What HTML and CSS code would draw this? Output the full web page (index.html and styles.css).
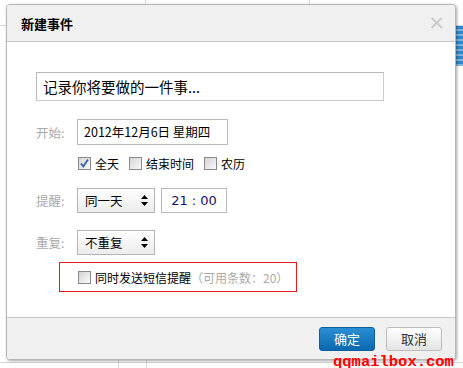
FILE: index.html
```html
<!DOCTYPE html>
<html>
  <head>
    <meta charset="utf-8">
    <link rel="stylesheet" href="styles.css">
    <title>新建事件</title>
  </head>
  <body>
    <!--calendar behind the dialog-->
    <div class="calendar">
      <div class="cal-line h1"></div>
      <div class="cal-line v1"></div>
      <div class="cal-line v2"></div>
      <div class="cal-blue"></div>
      <div class="cal-line h2"></div>
      <div class="cal-line v3"></div>
      <div class="cal-line v4"></div>
    </div>

    <!--Dialog-->
    <div class="dialog">
      <div class="dlg-head">
        <span class="dlg-title">新建事件</span>
        <span class="dlg-close">×</span>
      </div>
      <div class="dlg-body">
        <div class="title-box">记录你将要做的一件事...</div>

        <div class="row row-start">
          <span class="label">开始:</span>
          <div class="field date-field">2012年12月6日 星期四</div>
        </div>

        <div class="row row-checks">
          <label class="check"><span class="cb checked"><svg width="11" height="11" viewBox="0 0 11 11"><path d="M2 5.5 L4.3 8.5 L9 1.5" fill="none" stroke="#2f5fb0" stroke-width="1.8"/></svg></span>全天</label>
          <label class="check"><span class="cb"></span>结束时间</label>
          <label class="check"><span class="cb"></span>农历</label>
        </div>

        <div class="row row-remind">
          <span class="label">提醒:</span>
          <div class="select">同一天<span class="arrows"><svg width="7" height="11" viewBox="0 0 7 11"><path d="M3.5 0 L7 4 L0 4 Z M0 7 L7 7 L3.5 11 Z" fill="#000"/></svg></span></div>
          <div class="field time-field">21 : 00</div>
        </div>

        <div class="row row-repeat">
          <span class="label">重复:</span>
          <div class="select">不重复<span class="arrows"><svg width="7" height="11" viewBox="0 0 7 11"><path d="M3.5 0 L7 4 L0 4 Z M0 7 L7 7 L3.5 11 Z" fill="#000"/></svg></span></div>
        </div>

        <div class="sms-box">
          <label class="check"><span class="cb"></span>同时发送短信提醒</label><span class="sms-count">（可用条数：20）</span>
        </div>
      </div>
      <div class="dlg-foot">
        <button class="btn btn-ok">确定</button>
        <button class="btn btn-cancel">取消</button>
      </div>
    </div>

    <div class="watermark">qqmailbox.com</div>
  </body>
</html>
```
FILE: styles.css
```css
body {
  margin: 0;
  width: 463px;
  height: 368px;
  overflow: hidden;
  background: #fff;
  font-family: "Noto Sans CJK SC", "DejaVu Sans", sans-serif;
  font-size: 12px;
  color: #000;
  position: relative;
}

/* background calendar bits */
.cal-line {
  position: absolute;
  background: #d8d8d8;
}

.h1 { left: 0; top: 25px; width: 463px; height: 1px; }
.v1 { left: 145px; top: 0; width: 1px; height: 8px; }
.v2 { left: 309px; top: 0; width: 1px; height: 8px; }
.h2 { left: 0; top: 362px; width: 463px; height: 1px; }
.v3 { left: 118px; top: 360px; width: 1px; height: 8px; }
.v4 { left: 146px; top: 360px; width: 1px; height: 8px; }

.cal-blue {
  position: absolute;
  left: 450px;
  top: 26px;
  width: 13px;
  height: 40px;
  background: repeating-linear-gradient(#2f86c8 0, #2f86c8 3px, #7fb4df 3px, #7fb4df 5px);
}

/* dialog */
.dialog {
  position: absolute;
  left: 6px;
  top: 4px;
  width: 448px;
  height: 354px;
  border: 1px solid #b5b5b5;
  border-radius: 4px;
  background: #fff;
  box-shadow: 1px 1px 3px rgba(0, 0, 0, 0.35);
  display: flex;
  flex-direction: column;
  overflow: hidden;
}

.dlg-head {
  height: 36px;
  background: #f0f0f0;
  border-bottom: 1px solid #c8c8c8;
  display: flex;
  align-items: center;
  justify-content: space-between;
  padding: 0 10px 0 14px;
  flex-shrink: 0;
}

.dlg-title {
  font-weight: bold;
  font-size: 13px;
}

.dlg-close {
  color: #c8c8c8;
  font-size: 20px;
  font-family: "DejaVu Sans", sans-serif;
  line-height: 20px;
  margin-top: -2px;
}

.dlg-body {
  flex: 1;
  padding: 30px 0 0 29px;
}

.title-box {
  width: 340px;
  height: 27px;
  border: 1px solid #b8b8b8;
  border-right-color: #ccc;
  border-bottom-color: #ccc;
  font-size: 14.5px;
  line-height: 27px;
  padding-left: 6px;
}

.row {
  display: flex;
  align-items: center;
}

.label {
  width: 41px;
  color: #aaa;
  font-size: 12.5px;
}

.field {
  border: 1px solid #b8b8b8;
  background: #fff;
  box-sizing: border-box;
  height: 26px;
  line-height: 24px;
}

.date-field {
  width: 151px;
  padding-left: 6px;
  font-size: 12.5px;
  white-space: nowrap;
}

.row-start {
  margin-top: 18px;
}

.row-checks {
  margin-top: 10px;
  padding-left: 42px;
  gap: 10px;
}

.check {
  display: flex;
  align-items: center;
  gap: 4px;
  font-size: 12px;
  white-space: nowrap;
}

.cb {
  width: 11px;
  height: 11px;
  border: 1px solid #8a8a8a;
  background: linear-gradient(135deg, #d4d4d4, #fafafa);
  display: flex;
  align-items: center;
  justify-content: center;
}

.row-remind {
  margin-top: 16px;
}

.select {
  width: 78px;
  height: 25px;
  box-sizing: border-box;
  border: 1px solid #b4b4b4;
  background: linear-gradient(#ffffff, #ececec);
  display: flex;
  align-items: center;
  justify-content: space-between;
  padding: 0 6px 0 7px;
  font-size: 12.5px;
}

.arrows {
  display: flex;
}

.time-field {
  width: 66px;
  height: 25px;
  margin-left: 6px;
  text-align: center;
  font-family: "DejaVu Sans", sans-serif;
  font-size: 13px;
  color: #14146e;
}

.row-repeat {
  margin-top: 17px;
}

.sms-box {
  margin: 7px 0 0 23px;
  width: 238px;
  height: 30px;
  box-sizing: border-box;
  border: 1px solid #e21a1a;
  display: flex;
  align-items: center;
  padding-left: 18px;
  white-space: nowrap;
}

.sms-count {
  color: #aaa;
  font-size: 12px;
}

.dlg-foot {
  height: 41px;
  background: #f0f0f0;
  border-top: 1px solid #c8c8c8;
  display: flex;
  align-items: center;
  justify-content: flex-end;
  gap: 11px;
  padding-right: 13px;
  flex-shrink: 0;
}

.btn {
  width: 56px;
  height: 24px;
  border-radius: 3px;
  font-family: "Noto Sans CJK SC", sans-serif;
  font-size: 13px;
  padding: 0;
}

.btn-ok {
  color: #fff;
  background: linear-gradient(#2b8ed4, #0a68b0);
  border: 1px solid #0d5f9c;
}

.btn-cancel {
  color: #333;
  background: linear-gradient(#ffffff, #e4e4e4);
  border: 1px solid #bdbdbd;
}

.watermark {
  position: absolute;
  left: 333px;
  top: 353px;
  color: #f00;
  font-family: "Liberation Mono", monospace;
  font-weight: bold;
  font-size: 15.5px;
}
```
